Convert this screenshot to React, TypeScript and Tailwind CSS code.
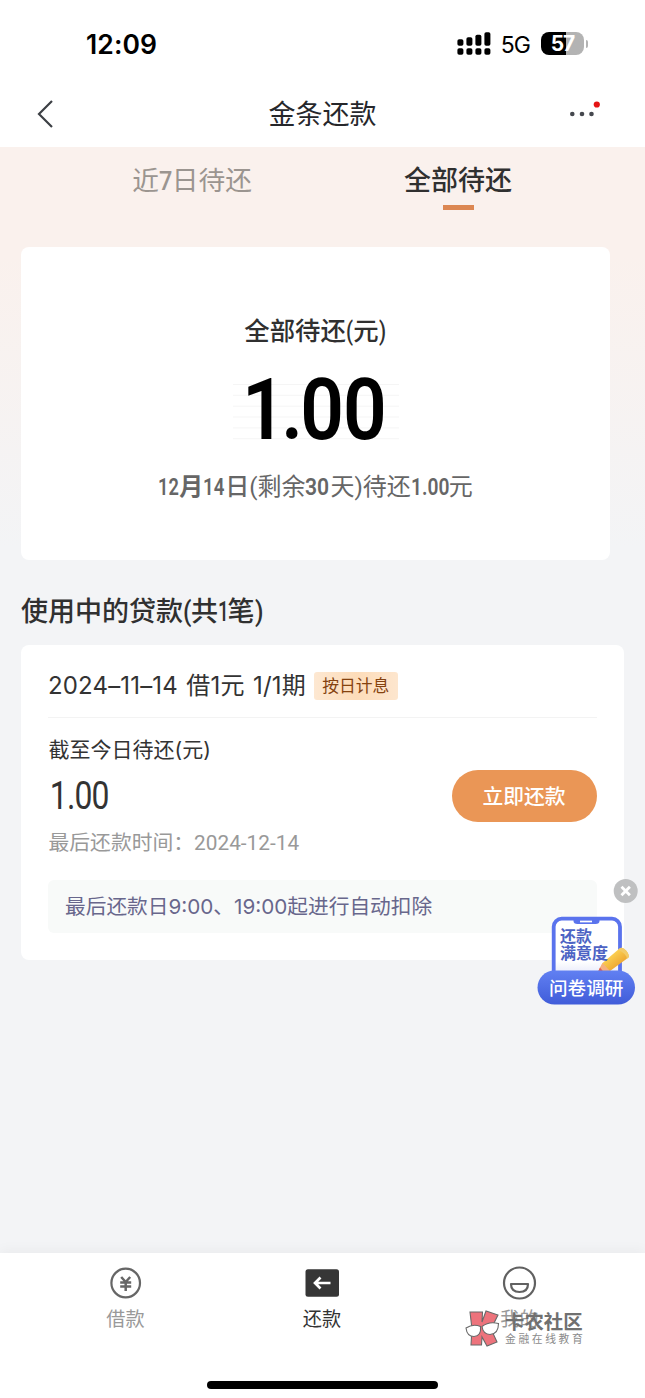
import React from "react";

const cjk = "font-['Inter','Noto_Sans_CJK_SC',sans-serif]";
const din = "font-['Roboto','Noto_Sans_CJK_SC',sans-serif]";
const narrow = "inline-block origin-left whitespace-nowrap";

function StatusBar() {
  const heights = [6.5, 8.5, 11, 13.5];
  return (
    <div className="flex h-[82px] items-start justify-between pl-[86px] pr-[57px] pt-[31px]">
      <span className="text-[26.5px] font-semibold leading-[27px] tracking-[0.1px] text-black">12:09</span>
      <div className="flex h-[25px] items-center">
        <svg width="34" height="23" viewBox="0 0 34 23">
          {heights.map((h, i) => (
            <g key={i}>
              <rect x={i * 9 + 0.4} y={13.7 - h} width="6" height={h} rx="1.8" />
              <rect x={i * 9 + 0.4} y="16.3" width="6" height="6.5" rx="1.8" />
            </g>
          ))}
        </svg>
        <span className="ml-[10px] mt-[2px] text-[23px] leading-[24px] tracking-[-0.9px] text-black">5G</span>
        <div className="ml-[11px] flex h-[23px] w-[43px] items-center justify-center overflow-hidden rounded-[8px] bg-gradient-to-r from-black from-[57%] to-[#b3b3b3] to-[57%]">
          <span className="text-[21px] font-bold leading-none tracking-[-1px] text-white">57</span>
        </div>
        <div className="ml-[1.5px] h-[8px] w-[2.5px] rounded-r-full bg-[#b3b3b3]" />
      </div>
    </div>
  );
}

function NavBar() {
  return (
    <div className="grid h-[65px] grid-cols-[100px_1fr_100px] items-center">
      <svg className="ml-[36px] -mt-[2px]" width="18" height="28" viewBox="0 0 18 28" fill="none" stroke="#3d4045" strokeWidth="2.2">
        <path d="M16 1 3 14l13 13" />
      </svg>
      <h1 className="text-center text-[27px] leading-[32px] text-[#26272b]">金条还款</h1>
      <svg className="ml-[24px] -mt-[15px]" width="34" height="20" viewBox="0 0 34 20" fill="#45484e">
        <circle cx="3.3" cy="17" r="2.3" />
        <circle cx="13" cy="17" r="2.3" />
        <circle cx="22.5" cy="17" r="2.3" />
        <circle cx="27.8" cy="7.5" r="3.1" fill="#e51414" />
      </svg>
    </div>
  );
}

function Tabs() {
  return (
    <div className="flex h-[100px] justify-center pl-[5px] pt-[17px]">
      <div className={`${din} w-[266px] pt-px text-center text-[26.7px] leading-[32px] text-[#9b9590]`}>
        近<b className={`${narrow} w-[13px] scale-x-[0.88] font-medium`}>7</b>日待还
      </div>
      <div className="flex w-[266px] flex-col items-center">
        <span className="text-[27px] font-medium leading-[34px] text-[#303030]">全部待还</span>
        <span className="mt-[7px] h-[5px] w-[31px] bg-[#dc8752]" />
      </div>
    </div>
  );
}

function Summary() {
  return (
    <section className={`${din} ml-[21px] flex h-[313px] w-[589px] flex-col items-center rounded-[8px] bg-white pt-[67px]`}>
      <div className="whitespace-nowrap text-[25.4px] font-medium leading-[34px] text-[#303030]">
        全部待还<span className={`${narrow} w-[7.5px] scale-x-[0.8]`}>(</span>元<span className={`${narrow} w-[8px] scale-x-[0.8]`}>)</span>
      </div>
      <div className="mt-[36px] flex h-[56px] w-[166px] items-center justify-center bg-[linear-gradient(#f5f5f5_1px,transparent_1px)] bg-[length:100%_10.85px] pb-[4px] pr-[3px]">
        <span className="scale-x-[0.9] text-[85px] font-semibold leading-[50px] tracking-[-1px] text-black">
          1<span className="ml-[-4px] tracking-[-3px]">.</span>00
        </span>
      </div>
      <div className="mt-[32px] whitespace-nowrap text-[24px] leading-[30px] text-[#666]">
        <b className="font-semibold"><span className={`${narrow} w-[21px] scale-x-[0.76]`}>12</span>月<span className={`${narrow} w-[22px] scale-x-[0.78]`}>14</span></b><b className="font-medium">日</b>
        (剩余<b className={`${narrow} w-[25px] scale-x-[0.88] font-semibold`}>30</b>天)待还<b className={`${narrow} w-[38px] scale-x-[0.8] font-semibold`}>1.00</b>元
      </div>
    </section>
  );
}

function Loan() {
  return (
    <section className="ml-[21px] h-[315px] w-[603px] rounded-[8px] bg-white px-[27px] pb-[28px]">
      <div className="flex h-[73px] items-center whitespace-nowrap border-b border-[#f3f3f3] pt-[10px]">
        <span className="text-[24px] leading-[32px] tracking-[0.16px] text-[#333] [word-spacing:1.5px]">2024–11–14 借1元 1/1期</span>
        <span className="ml-[8px] flex h-[28px] w-[84px] items-center justify-center rounded-[3px] bg-gradient-to-r from-[#fde8d2] via-[#fddcb9] to-[#fde6ce] pt-[2px] text-[16.8px] text-[#85420f]">按日计息</span>
      </div>
      <div className="flex h-[162px] justify-between">
        <div className="pl-[0.5px] pt-[17px]">
          <div className="text-[21px] leading-[30px] text-[#333]">截至今日待还(元)</div>
          <div className={`${din} mt-[11px] h-[40px] w-[60px] origin-left scale-x-[0.84] pl-px text-[38px] leading-[40px] tracking-[-1px] text-[#333]`}>1.00</div>
          <div className={`${din} mt-[12px] whitespace-nowrap text-[20.8px] leading-[30px] text-[#999]`}>最后还款时间：2024-12-14</div>
        </div>
        <button className="mt-[52px] h-[52px] w-[145px] rounded-full bg-[#ea9656] pr-px text-[20.8px] font-medium leading-[54px] text-white">立即还款</button>
      </div>
      <div className="h-[53px] whitespace-nowrap rounded-[6px] bg-[#f8faf9] pl-[17px] text-[20.7px] leading-[54px] text-[#68678c]">最后还款日9:00、19:00起进行自动扣除</div>
    </section>
  );
}

function Survey() {
  return (
    <div className="absolute left-[537px] top-[878px] h-[128px] w-[100px]">
      <svg className="absolute inset-0" width="101" height="128" viewBox="0 0 101 128">
        <defs>
          <linearGradient id="pill" x2="0" y2="1"><stop stopColor="#6180f2" /><stop offset="1" stopColor="#405cd9" /></linearGradient>
          <linearGradient id="paper" x2="0" y2="1"><stop offset=".65" stopColor="#fff" /><stop offset=".85" stopColor="#e8eafa" /></linearGradient>
          <linearGradient id="pencil" x2="1" y2="1"><stop offset=".25" stopColor="#ffdc5c" /><stop offset=".8" stopColor="#eb9d2a" /></linearGradient>
        </defs>
        <circle cx="88.7" cy="13" r="12" fill="#bfc0c1" />
        <path d="m84.5 8.8 8.4 8.4m0-8.4-8.4 8.4" stroke="#fff" strokeWidth="2.8" />
        <rect x="16.7" y="40.7" width="66.3" height="65" rx="8" fill="url(#paper)" stroke="#5a73ed" strokeWidth="3.8" />
        <path d="M36.5 39h26v4q0 3-4 3h-18q-4 0-4-3Z" fill="#5a73ed" />
        <path d="M43 43.500h12" stroke="#fff" strokeWidth="1.7" />
        <path d="M65.500 85 82.500 70.500q3-2 6.500 2t2.500 7L73 93l-12 1Z" fill="url(#pencil)" />
        <path d="m65.500 85 7.500 8-13 3Z" fill="#f5b080" />
        <path d="m63 89.500 4 5-7 1.500Z" fill="#e35b52" />
        <path d="m81 71.800 1.500-1.300q3-2 6.500 2t2.500 7l-2 1.400q1-4.500-8.500-9.100Z" fill="#f3cb68" />
        <rect x=".5" y="92.500" width="97.500" height="34" rx="17" fill="url(#pill)" />
      </svg>
      <div className="absolute left-[23px] top-[50px] whitespace-nowrap text-[16px] font-bold leading-[16.5px] text-[#4d63c4]">还款<br />满意度</div>
      <div className="absolute left-[12px] top-[97px] whitespace-nowrap text-[18.600px] font-medium leading-[27px] text-white">问卷调研</div>
    </div>
  );
}

function Watermark() {
  return (
    <div className="absolute left-[465px] top-[1309px] flex h-[38px]">
      <svg className="shrink-0" width="36" height="38" viewBox="0 0 36 38" stroke="#696969" strokeWidth="1.1">
        <path d="M5 3H17.500L17 13 21 2 33 6 26 20 32 33 22 37 17 28 16.500 36H6L7 20Z" fill="#ed737c" />
        <path d="M1 19Q8 14.500 15.500 17.500 16.500 27 9 27.500 2 27.500 1 19Z" fill="#fff" />
        <path d="M17 17.500Q24 12 33.500 14.500 33.500 25 25 25.500 18 25 17 17.500Z" fill="#fff" />
      </svg>
      <div className="ml-[4px] pt-[2px]">
        <div className="text-[19.4px] font-bold leading-[22px] text-[#707070]">卡农社区</div>
        <div className="-mt-px whitespace-nowrap text-[10.8px] leading-[15px] tracking-[2.6px] text-[#8b8b8b]">金融在线教育</div>
      </div>
    </div>
  );
}

function BottomBar() {
  const item = "flex w-[197px] flex-col items-center text-[19.2px] leading-[28px]";
  return (
    <nav className="flex h-[145px] flex-col items-center bg-white shadow-[0_-3px_12px_rgba(0,0,0,0.04)]">
      <div className="flex h-[128px] pt-[12px]">
        <div className={`${item} text-[#999]`}>
          <svg width="36" height="36" viewBox="0 0 36 36" fill="none" stroke="#666">
            <circle cx="17.7" cy="18" r="14.3" strokeWidth="2.2" />
            <path d="m13.200 12 4.500 5 4.500-5M12.200 17.500h11m-11 4h11M17.700 17v9" strokeWidth="2.500" />
          </svg>
          <span className="mt-[4px]">借款</span>
        </div>
        <div className={`${item} text-[#333]`}>
          <svg width="36" height="36" viewBox="0 0 36 36" fill="none">
            <rect x=".5" y="4.300" width="33.500" height="27.500" rx="2.500" fill="#363636" />
            <path d="M25.500 18H10m5.500-5.500L10 18l5.500 5.500" stroke="#fff" strokeWidth="2.700" />
          </svg>
          <span className="mt-[4px] pr-px">还款</span>
        </div>
        <div className={`${item} text-[#999]`}>
          <svg width="36" height="36" viewBox="0 0 36 36" fill="none" stroke="#616161" strokeWidth="2.2">
            <circle cx="17.500" cy="18" r="15.500" />
            <path d="M9 19h17q0 8-8.500 8T9 19Z" strokeLinejoin="round" />
          </svg>
          <span className="mt-[4px]">我的</span>
        </div>
      </div>
      <div className="h-[8px] w-[231px] rounded-full bg-black" />
    </nav>
  );
}

export default function App() {
  return (
    <div className={`${cjk} relative flex h-[1398px] w-[645px] flex-col overflow-hidden bg-[#f3f4f6]`}>
      <header className="h-[147px] bg-white">
        <StatusBar />
        <NavBar />
      </header>
      <main className="flex-1 bg-[linear-gradient(#faf1ed_0px,#faf1ed_110px,#f3f4f6_400px)]">
        <Tabs />
        <Summary />
        <h2 className={`${din} h-[85px] whitespace-nowrap pl-[21px] pt-[32px] text-[27px] font-medium leading-[41px] text-[#303030]`}>
          使用中的贷款<span className={`${narrow} w-[8px] scale-x-[0.9]`}>(</span>共<span className={`${narrow} w-[9.5px] scale-x-[0.7]`}>1</span>笔<span className={`${narrow} w-[8px] scale-x-[0.9]`}>)</span>
        </h2>
        <Loan />
      </main>
      <BottomBar />
      <Survey />
      <Watermark />
    </div>
  );
}
